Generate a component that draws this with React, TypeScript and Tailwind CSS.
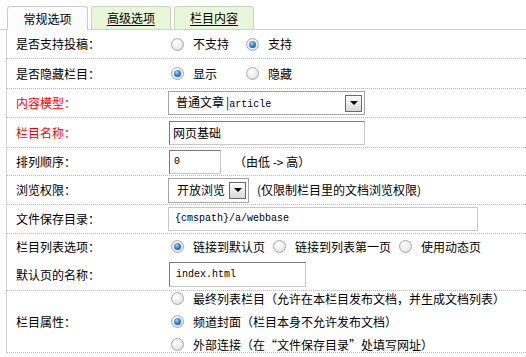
import React from "react";

const Radio = ({ checked }: { checked?: boolean }) => (
  <span className="inline-flex items-center justify-center w-[13px] h-[13px] rounded-full border border-[#a9a9a9] bg-[radial-gradient(circle_at_40%_35%,#ffffff_0%,#ececec_55%,#cfcfcf_100%)] shrink-0">
    {checked && (
      <span className="w-[7px] h-[7px] rounded-full bg-[radial-gradient(circle_at_40%_35%,#9fd3ff_0%,#2c7fd0_50%,#0b3f80_100%)]" />
    )}
  </span>
);

const RadioItem = ({ checked, label, className = "" }: { checked?: boolean; label: string; className?: string }) => (
  <span className={"inline-flex items-center " + className}>
    <Radio checked={checked} />
    <span className="ml-[9px]">{label}</span>
  </span>
);

const Arrow = () => (
  <span className="w-[17px] h-[17px] border border-[#6a6a6a] bg-[linear-gradient(#ffffff,#d8d8d8)] flex items-center justify-center">
    <span className="w-0 h-0 border-l-[4px] border-r-[4px] border-t-[4px] border-l-transparent border-r-transparent border-t-black" />
  </span>
);

const Row = ({ label, red, h, children, noBorder }: { label: string; red?: boolean; h: string; children?: React.ReactNode; noBorder?: boolean }) => (
  <div className={"flex items-center " + h + (noBorder ? "" : " border-b border-dotted border-[#b8b8b8]")}>
    <div className={"w-[161px] pl-[9px] shrink-0 " + (red ? "text-[#ff0000]" : "text-black")}>{label}</div>
    <div className="flex items-center flex-1">{children}</div>
  </div>
);

const mono = "font-['Liberation_Mono',monospace] text-[10px]";

export default function App() {
  return (
    <div className="w-[526px] h-[357px] bg-white overflow-hidden font-['Noto_Sans_CJK_SC','Noto_Sans',sans-serif] text-[12px] leading-none text-black">
      <div className="flex h-[30px] pt-[6px] pl-[7px] gap-[3px] border-b border-[#d0d0d0]">
        <div className="w-[81px] h-[24px] -mb-px border border-b-0 border-[#cccccc] rounded-t-[3px] bg-[#fcfcfc] flex items-center justify-center">常规选项</div>
        <div className="w-[80px] h-[23px] border border-b-0 border-[#c9d6bd] rounded-t-[3px] bg-[#e9f6da] flex items-center justify-center underline underline-offset-2">高级选项</div>
        <div className="w-[80px] h-[23px] border border-b-0 border-[#c9d6bd] rounded-t-[3px] bg-[#e9f6da] flex items-center justify-center underline underline-offset-2">栏目内容</div>
      </div>
      <div className="ml-[6px] border-l border-[#d5d5d5]">
        <Row label="是否支持投稿：" h="h-[29px]">
          <span className="ml-[3px] flex items-center">
            <RadioItem label="不支持" />
            <RadioItem checked label="支持" className="ml-[17px]" />
          </span>
        </Row>
        <Row label="是否隐藏栏目：" h="h-[30px]">
          <span className="ml-[3px] flex items-center">
            <RadioItem checked label="显示" />
            <RadioItem label="隐藏" className="ml-[29px]" />
          </span>
        </Row>
        <Row label="内容模型：" red h="h-[29px]">
          <div className="w-[197px] h-[24px] border border-[#a5a5a5] flex items-center justify-between pl-[7px] pr-[2px]">
            <span className="flex items-baseline">普通文章<span className="ml-[2px]">|</span><span className={mono}>article</span></span>
            <Arrow />
          </div>
        </Row>
        <Row label="栏目名称：" red h="h-[30px]">
          <div className="ml-[1px] w-[196px] h-[24px] border border-[#c8c8c8] border-t-[#7a7a7a] border-l-[#7a7a7a] flex items-center pl-[3px]">网页基础</div>
        </Row>
        <Row label="排列顺序：" h="h-[28px]">
          <div className={"ml-[1px] w-[52px] h-[24px] border border-[#c8c8c8] border-t-[#7a7a7a] border-l-[#7a7a7a] flex items-center pl-[4px] " + mono}>0</div>
          <span className="ml-[13px]">（由低 -&gt; 高）</span>
        </Row>
        <Row label="浏览权限：" h="h-[29px]">
          <div className="w-[81px] h-[25px] border border-[#a5a5a5] flex items-center justify-between pl-[8px] pr-[2px]">
            <span>开放浏览</span>
            <Arrow />
          </div>
          <span className="ml-[8px]">(仅限制栏目里的文档浏览权限)</span>
        </Row>
        <Row label="文件保存目录：" h="h-[29px]">
          <div className={"w-[310px] h-[24px] border border-[#c8c8c8] flex items-center pl-[6px] " + mono}>{"{cmspath}/a/webbase"}</div>
        </Row>
        <Row label="栏目列表选项：" h="h-[25px]" noBorder>
          <span className="ml-[3px] flex items-center">
            <RadioItem checked label="链接到默认页" />
            <RadioItem label="链接到列表第一页" className="ml-[8px]" />
            <RadioItem label="使用动态页" className="ml-[8px]" />
          </span>
        </Row>
        <Row label="默认页的名称：" h="h-[32px]">
          <div className={"ml-[1px] w-[137px] h-[25px] border border-[#c8c8c8] border-t-[#7a7a7a] border-l-[#7a7a7a] flex items-center pl-[6px] " + mono}>index.html</div>
        </Row>
        <Row label="栏目属性：" h="h-[62px]">
          <div className="ml-[3px] flex flex-col gap-[10px]">
            <RadioItem label="最终列表栏目（允许在本栏目发布文档，并生成文档列表）" />
            <RadioItem checked label="频道封面（栏目本身不允许发布文档）" />
            <RadioItem label="外部连接（在“文件保存目录”处填写网址）" />
          </div>
        </Row>
      </div>
    </div>
  );
}
